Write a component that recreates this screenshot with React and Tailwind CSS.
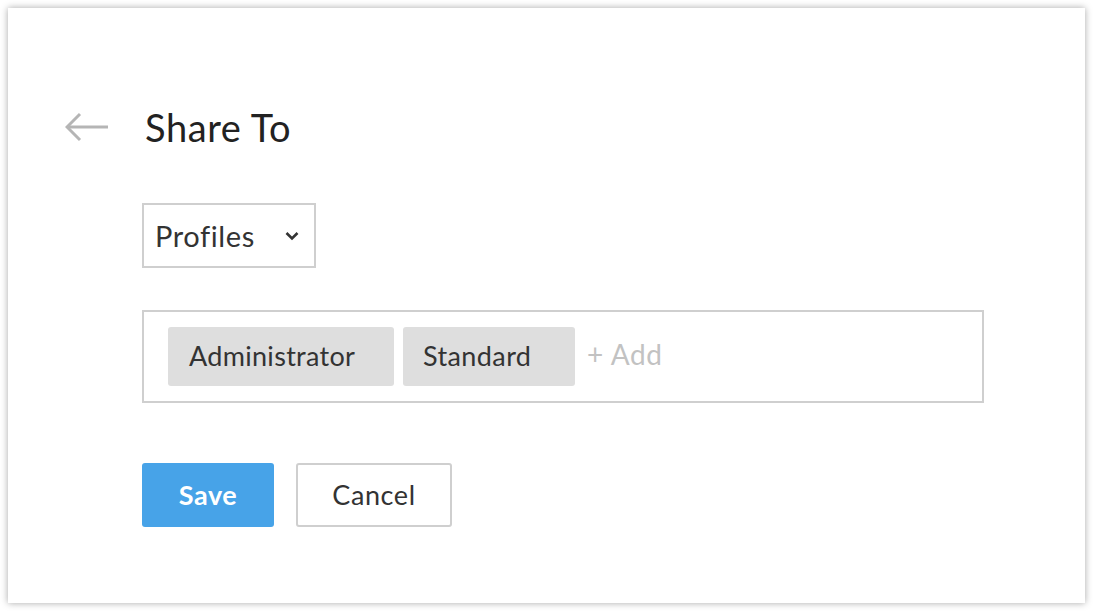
export default function App() {
  return (
    <div className="w-[1093px] h-[611px] bg-white pt-2 pl-2" style={{ fontFamily: "Lato, 'Open Sans', sans-serif" }}>
      <div className="w-[1077px] h-[595px] bg-white shadow-[0_0_7px_rgba(0,0,0,0.35)] flex flex-col">
        <div className="flex items-center mt-[96px] h-[46px]">
          <svg className="ml-[57px]" width="44" height="30" viewBox="0 0 44 30" fill="none" stroke="#b5b5b5" strokeWidth="3">
            <path d="M2 15 H43" />
            <path d="M15 2 L2 15 L15 28" />
          </svg>
          <div className="ml-[36px] text-[38px] text-[#222] leading-none tracking-[0.6px]">Share To</div>
        </div>
        <div className="ml-[134px] mt-[53px] flex flex-col">
          <div className="w-[174px] h-[65px] border-2 border-[#cfcfcf] flex items-center justify-between pl-[11px] pr-[15px]">
            <span className="text-[29px] text-[#333] tracking-[0.6px]">Profiles</span>
            <svg width="14" height="10" viewBox="0 0 14 10" fill="none" stroke="#333" strokeWidth="2.6">
              <path d="M1.5 2 L7 7.5 L12.5 2" />
            </svg>
          </div>
          <div className="mt-[42px] w-[842px] h-[93px] border-2 border-[#cfcfcf] flex items-center pl-[24px] gap-[9px]">
            <div className="h-[59px] w-[226px] rounded-[3px] bg-[#dedede] flex items-center pl-[21px] text-[27px] tracking-[0.3px] text-[#333]">Administrator</div>
            <div className="h-[59px] w-[172px] rounded-[3px] bg-[#dedede] flex items-center pl-[20px] text-[27px] tracking-[0.4px] text-[#333]">Standard</div>
            <div className="ml-[3px] -mt-[6px] text-[28px] tracking-[0.6px] text-[#c2c2c2]">+ Add</div>
          </div>
          <div className="mt-[60px] flex gap-[22px]">
            <button className="w-[132px] h-[64px] rounded-[3px] bg-[#47a3e8] text-white text-[27px] tracking-[0.6px] font-bold">Save</button>
            <button className="w-[156px] h-[64px] rounded-[3px] border-2 border-[#cfcfcf] bg-white text-[#333] text-[27px] tracking-[0.6px]">Cancel</button>
          </div>
        </div>
      </div>
    </div>
  );
}
